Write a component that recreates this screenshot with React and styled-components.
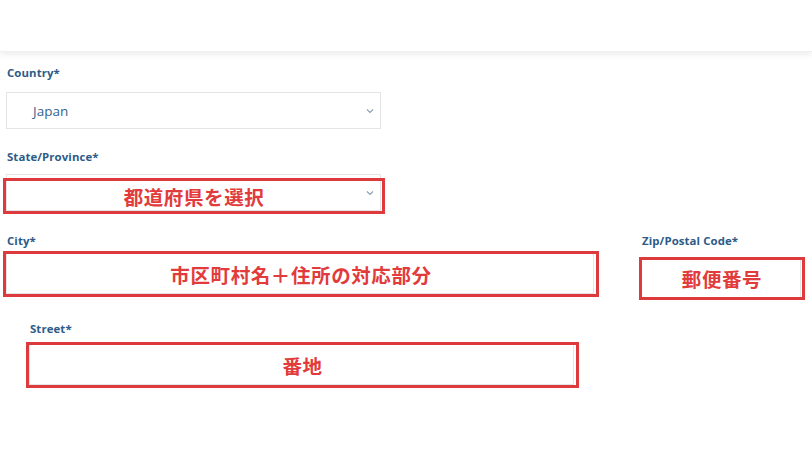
import React from "react";
import styled, { createGlobalStyle } from "styled-components";

const GlobalStyle = createGlobalStyle`
  html, body { margin: 0; padding: 0; background: #ffffff; }
  body { font-family: "Open Sans", "Noto Sans", sans-serif; }
  * { box-sizing: border-box; }
`;

const Page = styled.div`
  width: 812px;
  height: 457px;
  overflow: hidden;
  background: #fff;
`;

const Header = styled.header`
  height: 52px;
  background: #fff;
  box-shadow: 0 3px 6px rgba(0, 0, 0, 0.07);
  border-bottom: 1px solid #f0f0f0;
`;

const Form = styled.form`
  display: flex;
  flex-direction: column;
  padding: 14px 0 0 6px;
`;

const Field = styled.div`
  display: flex;
  flex-direction: column;
  gap: ${(p) => p.$gap}px;
  margin-top: ${(p) => p.$top || 0}px;
  margin-left: ${(p) => p.$left || 0}px;
  width: ${(p) => p.$width}px;
`;

const Label = styled.label`
  display: block;
  height: 14px;
  line-height: 14px;
  font-size: 11.4px;
  font-weight: 700;
  color: #2d5b88;
  padding-left: ${(p) => p.$indent || 1}px;
  letter-spacing: 0.1px;
`;

const Control = styled.div`
  position: relative;
  height: ${(p) => p.$h}px;
  border: 1.5px solid #e4e4e4;
  background: #fff;
  display: flex;
  align-items: center;
  padding-left: 26px;
  font-size: 13.5px;
  color: #35648f;
`;

const Chevron = styled.svg`
  position: absolute;
  right: 6px;
  top: 50%;
  margin-top: -3px;
  width: 8px;
  height: 6px;
`;

const Mark = styled.div`
  position: absolute;
  top: ${(p) => p.$t}px;
  left: ${(p) => p.$l}px;
  right: ${(p) => p.$r}px;
  bottom: ${(p) => p.$b}px;
  border: 3px solid #dc3a3c;
  display: flex;
  align-items: center;
  justify-content: center;
  font-family: "Noto Sans CJK JP", "Noto Sans CJK SC", sans-serif;
  font-weight: 700;
  font-size: 19.5px;
  letter-spacing: 0.6px;
  color: #e23b3b;
`;

const Row = styled.div`
  display: flex;
  align-items: flex-start;
  margin-top: 23px;
`;

const ChevronIcon = () => (
  <Chevron viewBox="0 0 8 6">
    <path d="M1 1.5 L4 4.5 L7 1.5" fill="none" stroke="#8a9fb5" strokeWidth="1.1" />
  </Chevron>
);

export default function App() {
  return (
    <Page>
      <GlobalStyle />
      <Header />
      <Form>
        <Field $gap={12} $width={375}>
          <Label>Country*</Label>
          <Control $h={37}>
            Japan
            <ChevronIcon />
          </Control>
        </Field>

        <Field $gap={10} $top={21} $width={375}>
          <Label>State/Province*</Label>
          <Control $h={37}>
            <ChevronIcon />
            <Mark $t={3} $l={-4} $r={-5} $b={-4}>都道府県を選択</Mark>
          </Control>
        </Field>

        <Row>
          <Field $gap={5} $width={588}>
            <Label>City*</Label>
            <Control $h={41}>
              <Mark $t={-3} $l={-4} $r={-6} $b={-4}>市区町村名＋住所の対応部分</Mark>
            </Control>
          </Field>
          <Field $gap={10} $left={47} $width={160}>
            <Label $indent={0}>Zip/Postal Code*</Label>
            <Control $h={40}>
              <Mark $t={-2} $l={-3} $r={-5} $b={-3}>郵便番号</Mark>
            </Control>
          </Field>
        </Row>

        <Field $gap={7} $top={24} $left={23} $width={545}>
          <Label>Street*</Label>
          <Control $h={42}>
            <Mark $t={-2} $l={-4} $r={-6} $b={-4}>番地</Mark>
          </Control>
        </Field>
      </Form>
    </Page>
  );
}
